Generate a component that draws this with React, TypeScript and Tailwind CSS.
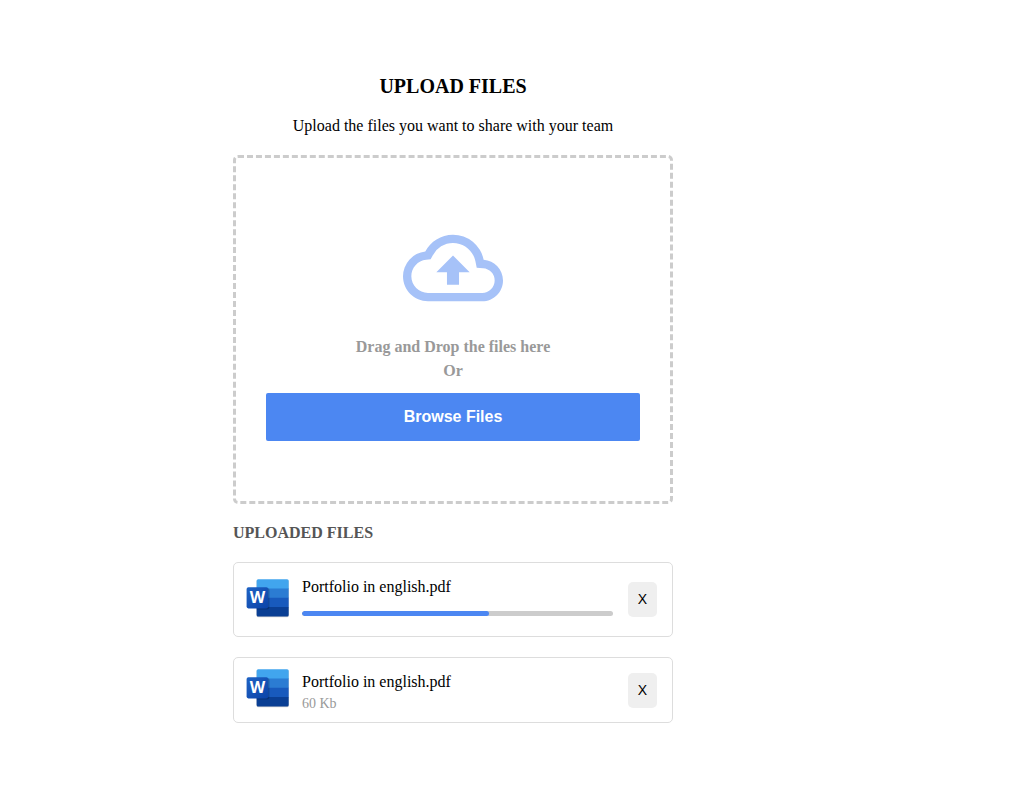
import { useRef, useState } from "react";

type UploadedFile = {
  id: number;
  name: string;
  size?: string;
  progress?: number;
};

const initialFiles: UploadedFile[] = [
  { id: 1, name: "Portfolio in english.pdf", progress: 60 },
  { id: 2, name: "Portfolio in english.pdf", size: "60 Kb" },
];

function CloudIcon() {
  return (
    <svg viewBox="0 0 24 24" className="size-[100px] fill-[#a6c2f8]" aria-hidden="true">
      <path d="M19.35 10.04A7.49 7.49 0 0 0 12 4C9.11 4 6.6 5.64 5.35 8.04A5.994 5.994 0 0 0 0 14c0 3.31 2.69 6 6 6h13c2.76 0 5-2.24 5-5 0-2.64-2.05-4.78-4.65-4.96zM19 18H6c-2.21 0-4-1.79-4-4 0-2.05 1.53-3.76 3.56-3.97l1.07-.11.5-.95A5.469 5.469 0 0 1 12 6c2.62 0 4.88 1.86 5.39 4.43l.3 1.5 1.53.11A2.98 2.98 0 0 1 22 15c0 1.65-1.35 3-3 3zM8 13h2.55v3h2.9v-3H16l-4-4z" />
    </svg>
  );
}

function WordIcon({ id }: { id: number }) {
  const tile = `word-tile-${id}`;
  const page = `word-page-${id}`;
  return (
    <svg viewBox="0 0 48 48" className="size-12 shrink-0" aria-hidden="true">
      <defs>
        <linearGradient id={tile} x1="0" y1="0" x2="1" y2="1">
          <stop offset="0" stopColor="#1f63c4" />
          <stop offset="1" stopColor="#0b43a8" />
        </linearGradient>
        <clipPath id={page}>
          <rect x="12.6" y="3.2" width="32.1" height="37.3" rx="1.6" />
        </clipPath>
      </defs>
      <rect x="12.6" y="4" width="32.1" height="37.3" rx="1.6" fill="#000" opacity=".18" />
      <g clipPath={`url(#${page})`}>
        <path fill="#41a5ee" d="M12 3h33v10H12z" />
        <path fill="#2b7cd3" d="M12 12.5h33v9.5H12z" />
        <path fill="#185abd" d="M12 21.7h33v9.5H12z" />
        <path fill="#0a3f94" d="M12 31h33v10H12z" />
        <rect x="3" y="12" width="22.5" height="21.5" rx="2" fill="#000" opacity=".2" />
      </g>
      <rect x="2.6" y="11.2" width="21.6" height="21.2" rx="1.8" fill={`url(#${tile})`} />
      <text
        x="13.4"
        y="27"
        textAnchor="middle"
        className="fill-white font-['Open_Sans','Noto_Sans',sans-serif] text-[16px] font-bold"
      >
        W
      </text>
    </svg>
  );
}

function FileCard({ file, onRemove }: { file: UploadedFile; onRemove: () => void }) {
  return (
    <li className="flex items-center rounded-[5px] border border-[#dddddd] py-2 pr-[15px] pl-[10px]">
      <WordIcon id={file.id} />
      <div className="mr-[15px] ml-[10px] min-w-0 flex-1 pt-1">
        <p className="leading-6">{file.name}</p>
        {file.progress !== undefined && (
          <div
            role="progressbar"
            aria-label={file.name}
            aria-valuenow={file.progress}
            className="my-3 h-[5px] overflow-hidden rounded-full bg-[#cccccc]"
          >
            <div className="h-full rounded-full bg-[#4c87f2]" style={{ width: `${file.progress}%` }} />
          </div>
        )}
        {file.size && <p className="text-[14px] leading-5 text-[#999999]">{file.size}</p>}
      </div>
      <button
        type="button"
        aria-label={`X, remove ${file.name}`}
        onClick={onRemove}
        className="h-[35px] w-[29px] shrink-0 cursor-pointer rounded-[5px] bg-[#efefef] font-['Liberation_Sans',Arial,sans-serif] text-[14px]"
      >
        X
      </button>
    </li>
  );
}

export default function App() {
  const [files, setFiles] = useState(initialFiles);
  const input = useRef<HTMLInputElement>(null);

  return (
    <div className="min-h-screen bg-white font-['Liberation_Serif','Times_New_Roman',serif] text-[16px] text-black">
      <div className="max-w-[906px]">
        <main className="mx-auto max-w-[440px] pt-[74px]">
          <h1 className="text-center text-[20px] leading-6 font-bold">UPLOAD FILES</h1>
          <p className="mt-4 text-center leading-6">Upload the files you want to share with your team</p>
          <section className="mt-[17px] flex flex-col items-center rounded-[5px] border-[3px] border-dashed border-[#cccccc] px-[30px] py-[60px]">
            <CloudIcon />
            <p className="mt-[17px] text-center leading-6 font-bold text-[#999999]">
              Drag and Drop the files here
              <br />
              Or
            </p>
            <input ref={input} type="file" multiple className="hidden" aria-label="Browse Files" />
            <button
              type="button"
              onClick={() => input.current?.click()}
              className="mt-[10px] h-12 w-full cursor-pointer rounded-[2px] bg-[#4c87f2] font-['Liberation_Sans',Arial,sans-serif] font-bold text-white"
            >
              Browse Files
            </button>
          </section>
          <h2 className="mt-[17px] leading-6 font-bold text-[#555555]">UPLOADED FILES</h2>
          <ul className="mt-[17px] flex flex-col gap-5 pb-16">
            {files.map((file) => (
              <FileCard
                key={file.id}
                file={file}
                onRemove={() => setFiles(files.filter((other) => other.id !== file.id))}
              />
            ))}
          </ul>
        </main>
      </div>
    </div>
  );
}
